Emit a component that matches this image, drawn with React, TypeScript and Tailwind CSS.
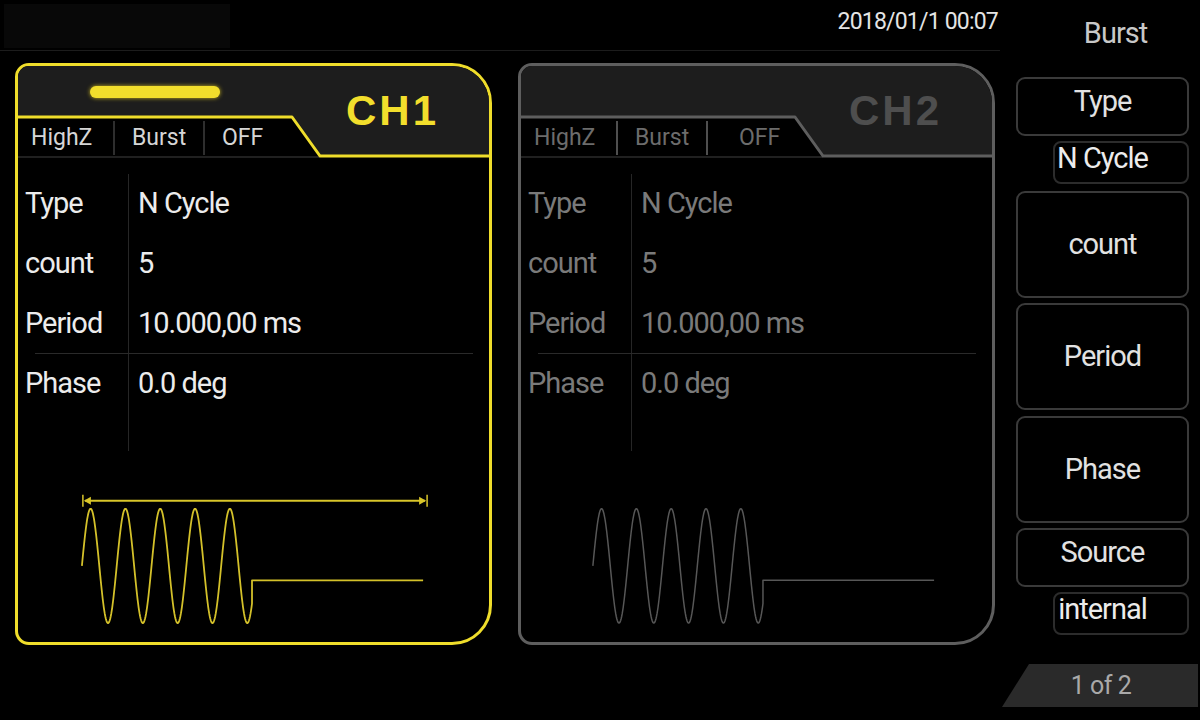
import React from "react";

type Channel = {
  name: string;
  active: boolean;
  waveStart: number;
  offPad: string;
};

const channels: Channel[] = [
  { name: "CH1", active: true, waveStart: 63, offPad: "pl-[17px]" },
  { name: "CH2", active: false, waveStart: 71, offPad: "pl-[31px]" },
];

const rows = [
  { label: "Type", value: "N Cycle" },
  { label: "count", value: "5" },
  { label: "Period", value: "10.000,00 ms" },
  { label: "Phase", value: "0.0 deg" },
];

function wavePath(x0: number) {
  const mid = 115.5;
  const amp = 57.5;
  const period = 35;
  let d = `M${x0},${mid}`;
  for (let i = 0.5; i <= 171; i += 0.5) {
    const y = mid - amp * Math.sin((2 * Math.PI * i) / period);
    d += ` L${(x0 + i).toFixed(1)},${y.toFixed(1)}`;
  }
  d += ` L${x0 + 171},130 L${x0 + 343},130`;
  return d;
}

function ChannelPanel({ ch }: { ch: Channel }) {
  const on = ch.active;
  const stroke = on ? "#efdd2b" : "#5e5e5e";

  return (
    <div
      className={`w-[477px] h-[582px] border-[3px] rounded-tl-[14px] rounded-bl-[14px] rounded-tr-[40px] rounded-br-[40px] overflow-hidden flex flex-col bg-black ${
        on ? "border-[#efdd2b]" : "border-[#5e5e5e]"
      }`}
    >
      {/* header with tab */}
      <div className="relative h-[92px] bg-[#1d1d1d] flex flex-col shrink-0">
        <svg className="absolute inset-0" width="471" height="92" viewBox="0 0 471 92">
          <path d="M0,51 L274,51 L302,90 L471,90 L471,92 L0,92 Z" fill="#000" />
          <line x1="0" y1="91" x2="302" y2="91" stroke="#2b2b2b" strokeWidth="1.5" />
          <polyline
            points="0,51 274,51 302,90 471,90"
            fill="none"
            stroke={stroke}
            strokeWidth="3"
            strokeLinejoin="round"
          />
        </svg>

        <div className="relative flex h-[52px]">
          {on ? (
            <div className="ml-[72px] mt-[20px] w-[130px] h-[12px] rounded-full bg-[#f2de2c] shadow-[0_0_4px_#c9b520]" />
          ) : null}
          <div
            className={`ml-auto mr-[50px] mt-[24px] h-[42px] text-[42px] leading-none font-bold tracking-[3px] font-['Liberation_Sans',sans-serif] ${
              on ? "text-[#f2de2c]" : "text-[#4e4e4e]"
            }`}
          >
            {ch.name}
          </div>
        </div>

        <div
          className={`relative flex items-center h-[38px] pt-[2px] text-[23px] font-['Roboto',sans-serif] ${
            on ? "text-[#d6d6d6]" : "text-[#6c6c6c]"
          }`}
        >
          <div className="w-[95px] pl-[13px] h-[34px] flex items-center">HighZ</div>
          <div
            className={`w-[90px] pl-[17px] h-[34px] flex items-center border-l-2 ${
              on ? "border-[#2e2e2e]" : "border-[#4f4f4f]"
            }`}
          >
            Burst
          </div>
          <div
            className={`${ch.offPad} h-[34px] flex items-center border-l-2 ${
              on ? "border-[#2e2e2e]" : "border-[#4f4f4f]"
            }`}
          >
            OFF
          </div>
        </div>
      </div>

      {/* parameter table */}
      <div
        className={`pt-[16px] flex flex-col text-[29px] tracking-[-1px] font-['Roboto',sans-serif] ${
          on ? "text-[#ececec]" : "text-[#7a7a7a]"
        }`}
      >
        {rows.map((r, i) => (
          <React.Fragment key={r.label}>
            {i === 3 ? <div className="h-px ml-[17px] mr-[16px] bg-[#2a2a2a]" /> : null}
            <div className={`flex ${i === 2 ? "h-[59px]" : "h-[60px]"}`}>
              <div className="w-[110px] pl-[7px] flex items-center">{r.label}</div>
              <div className="flex-1 pl-[9px] flex items-center border-l border-[#262626]">{r.value}</div>
            </div>
          </React.Fragment>
        ))}
        <div className="flex h-[37px]">
          <div className="w-[110px]" />
          <div className="flex-1 border-l border-[#262626]" />
        </div>
      </div>

      {/* burst waveform */}
      <svg width="471" height="192" viewBox="0 0 471 192" className="block">
        {on ? (
          <g stroke="#d9c62a" strokeWidth="2" fill="#d9c62a">
            <line x1="66" y1="50" x2="408" y2="50" />
            <line x1="64" y1="44" x2="64" y2="56" strokeWidth="1.5" />
            <line x1="410" y1="44" x2="410" y2="56" strokeWidth="1.5" />
            <polygon points="65,50 72,46 72,54" strokeWidth="0" />
            <polygon points="409,50 402,46 402,54" strokeWidth="0" />
          </g>
        ) : null}
        <path
          d={wavePath(ch.waveStart)}
          fill="none"
          stroke={on ? "#d4c12a" : "#575757"}
          strokeWidth={on ? 1.8 : 1.5}
          strokeLinejoin="round"
        />
      </svg>
    </div>
  );
}

function SideButton({ label, tall }: { label: string; tall?: boolean }) {
  return (
    <div
      className={`w-full flex items-center justify-center rounded-[9px] border-2 border-[#3a3a3a] text-[29px] tracking-[-1px] text-[#e2e2e2] ${
        tall ? "h-[107px]" : "h-[59px] pb-[10px]"
      }`}
    >
      {label}
    </div>
  );
}

function SideValue({ value }: { value: string }) {
  return (
    <div className="grid w-full h-[43px]">
      <div className="[grid-area:1/1] ml-[37px] rounded-[8px] border-2 border-[#2c2c2c]" />
      <div className="[grid-area:1/1] flex justify-center items-start -mt-[4px] text-[29px] tracking-[-1px] text-[#ececec]">
        {value}
      </div>
    </div>
  );
}

export default function App() {
  return (
    <div className="w-[1200px] h-[720px] bg-black flex overflow-hidden font-['Roboto',sans-serif]">
      <main className="w-[1000px] flex flex-col">
        {/* status bar */}
        <div className="h-[51px] border-b border-[#1c1c1c] flex">
          <div className="ml-[4px] mt-[4px] w-[226px] h-[44px] bg-[#080808]" />
          <div className="ml-auto mr-[2px] h-[44px] flex items-center text-[23px] tracking-[-0.8px] text-[#e4e4e4]">
            2018/01/1 00:07
          </div>
        </div>

        <div className="flex gap-[26px] pl-[15px] pt-[12px]">
          {channels.map((ch) => (
            <ChannelPanel key={ch.name} ch={ch} />
          ))}
        </div>
      </main>

      <aside className="w-[200px] flex flex-col">
        <div className="pl-[16px] pr-[11px] flex flex-col">
          <div className="h-[68px] pl-[26px] flex items-center justify-center text-[29px] tracking-[-1px] text-[#c8c8c8]">
            Burst
          </div>
          <div className="mt-[9px]">
            <SideButton label="Type" />
          </div>
          <div className="mt-[5px]">
            <SideValue value="N Cycle" />
          </div>
          <div className="mt-[7px]">
            <SideButton label="count" tall />
          </div>
          <div className="mt-[5px]">
            <SideButton label="Period" tall />
          </div>
          <div className="mt-[6px]">
            <SideButton label="Phase" tall />
          </div>
          <div className="mt-[5px]">
            <SideButton label="Source" />
          </div>
          <div className="mt-[5px]">
            <SideValue value="internal" />
          </div>
        </div>

        <div className="mt-[29px] ml-[2px] w-[196px] h-[43px] bg-[#2a2a2a] flex items-center justify-center pl-[2px] text-[25px] tracking-[-0.5px] text-[#a9a9a9] [clip-path:polygon(27px_0,100%_0,100%_100%,0_100%)]">
          1 of 2
        </div>
      </aside>
    </div>
  );
}
